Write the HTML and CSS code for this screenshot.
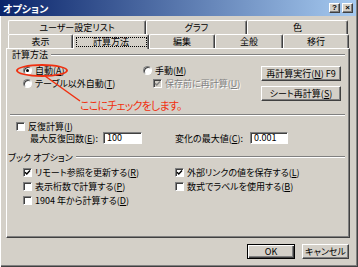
FILE: index.html
```html
<!DOCTYPE html>
<html lang="ja">
<head>
    <meta charset="UTF-8">
    <title>オプション</title>
    <link rel="stylesheet" href="styles.css">
</head>
<body>
    <div class="window">
        <div class="titlebar">
            <span class="title">オプション</span>
            <div class="caption-btns">
                <span class="cbtn">?</span>
                <span class="cbtn">×</span>
            </div>
        </div>

        <div class="tabs">
            <div class="tab-row">
                <div class="tab w138">ユーザー設定リスト</div>
                <div class="tab w101">グラフ</div>
                <div class="tab w101">色</div>
            </div>
            <div class="tab-row">
                <div class="tab w65">表示</div>
                <div class="tab w76 active"><span class="focus">計算方法</span></div>
                <div class="tab w66">編集</div>
                <div class="tab w68">全般</div>
                <div class="tab w66">移行</div>
            </div>
        </div>

        <div class="panel">
            <div class="group-head calc-head">計算方法</div>

            <div class="calc">
                <div class="opts">
                    <div class="col col1">
                        <div class="opt"><span class="radio checked"></span><span>自動(<u>A</u>)</span></div>
                        <div class="opt"><span class="radio"></span><span>テーブル以外自動(<u>T</u>)</span></div>
                    </div>
                    <div class="col">
                        <div class="opt"><span class="radio"></span><span>手動(<u>M</u>)</span></div>
                        <div class="opt sub disabled"><span class="check on"><svg viewBox="0 0 7 7"><polyline points="1,3.2 2.8,5 6,1.6"/></svg></span><span>保存前に再計算(<u>U</u>)</span></div>
                    </div>
                </div>
                <div class="btns">
                    <div class="btn wide"><span>再計算実行(<u>N</u>) F9</span></div>
                    <div class="btn wide"><span>シート再計算(<u>S</u>)</span></div>
                </div>

                <!-- 注釈 -->
                <div class="mark"></div>
                <svg class="pointer" width="90" height="50"><line x1="38" y1="16" x2="73" y2="41"/></svg>
                <div class="note">ここにチェックをします。</div>
            </div>

            <div class="sep"></div>

            <div class="opt iter"><span class="check"></span><span>反復計算(<u>I</u>)</span></div>
            <div class="limits">
                <span class="lbl lbl1">最大反復回数(<u>E</u>):</span>
                <span class="field f1">100</span>
                <span class="lbl lbl2">変化の最大値(<u>C</u>):</span>
                <span class="field f2">0.001</span>
            </div>

            <div class="group-head book-head">ブック オプション</div>

            <div class="book">
                <div class="opt"><span class="check on"><svg viewBox="0 0 7 7"><polyline points="1,3.2 2.8,5 6,1.6"/></svg></span><span>リモート参照を更新する(<u>R</u>)</span></div>
                <div class="opt"><span class="check on"><svg viewBox="0 0 7 7"><polyline points="1,3.2 2.8,5 6,1.6"/></svg></span><span>外部リンクの値を保存する(<u>L</u>)</span></div>
                <div class="opt"><span class="check"></span><span>表示桁数で計算する(<u>P</u>)</span></div>
                <div class="opt"><span class="check"></span><span>数式でラベルを使用する(<u>B</u>)</span></div>
                <div class="opt"><span class="check"></span><span>1904 年から計算する(<u>D</u>)</span></div>
            </div>
        </div>

        <div class="footer">
            <div class="btn ok">OK</div>
            <div class="btn cancel">キャンセル</div>
        </div>
    </div>
</body>
</html>
```

FILE: styles.css
```css
* {
    box-sizing: border-box;
}
body {
    margin: 0;
    font-family: "Noto Sans CJK JP", "Liberation Sans", sans-serif;
    font-size: 9px;
    font-feature-settings: "palt";
    color: #000;
    background-color: #d4d0c8;
}
u {
    text-decoration: underline;
    text-underline-offset: 1px;
}
.window {
    width: 358px;
    height: 267px;
    background-color: #d4d0c8;
    display: flex;
    flex-direction: column;
    box-shadow: inset 1px 0 #fff, inset -1px -1px #404040, inset -2px -2px #808080;
}

/* タイトルバー */
.titlebar {
    height: 16px;
    margin-right: 2px;
    padding: 0 3px 0 3px;
    display: flex;
    align-items: center;
    justify-content: space-between;
    background: linear-gradient(to right, #0a246a, #a6caf0);
}
.title {
    color: #fff;
    font-weight: bold;
    font-size: 10px;
}
.caption-btns {
    display: flex;
    gap: 2px;
}
.cbtn {
    width: 11px;
    height: 10px;
    background-color: #d4d0c8;
    border: 1px solid;
    border-color: #fff #404040 #404040 #fff;
    box-shadow: inset -1px -1px #808080;
    font-family: "Liberation Sans", sans-serif;
    font-weight: bold;
    font-size: 8px;
    line-height: 8px;
    text-align: center;
}

/* タブ */
.tabs {
    margin-top: 4px;
    padding-left: 8px;
}
.tab-row {
    display: flex;
    height: 14px;
}
.tab {
    height: 14px;
    border-top: 1px solid #fff;
    border-left: 1px solid #fff;
    border-right: 1px solid #404040;
    border-radius: 2px 2px 0 0;
    box-shadow: inset -1px 0 #808080;
    display: flex;
    align-items: center;
    justify-content: center;
    background-color: #d4d0c8;
}
.tab.active {
    height: 15px;
    margin-bottom: -1px;
    position: relative;
    z-index: 1;
}
.tab.active .focus {
    border: 1px dotted #000;
    width: 71px;
    height: 10px;
    display: flex;
    align-items: center;
    justify-content: center;
    margin-top: -1px;
}
.w138 { width: 138px; }
.w101 { width: 101px; }
.w65 { width: 65px; }
.w76 { width: 76px; }
.w66 { width: 66px; }
.w68 { width: 68px; }

/* パネル */
.panel {
    margin-left: 6px;
    width: 344px;
    height: 190px;
    border: 1px solid;
    border-color: #fff #404040 #404040 #fff;
    box-shadow: inset -1px -1px #808080;
}
.group-head {
    display: flex;
    align-items: center;
    height: 11px;
    padding-right: 4px;
}
.group-head::after {
    content: "";
    flex: 1;
    margin-left: 3px;
    border-top: 1px solid #808080;
    border-bottom: 1px solid #fff;
}
.calc-head {
    padding-left: 5px;
}
.book-head {
    height: 12px;
    margin-top: 7px;
    padding-left: 1px;
}

.calc {
    position: relative;
    display: flex;
    height: 45px;
}
.opts {
    display: flex;
    padding-left: 16px;
    padding-top: 4px;
}
.col1 {
    width: 120px;
}
.opt {
    display: flex;
    align-items: center;
    gap: 3px;
    height: 13px;
    white-space: nowrap;
}
.opt.sub {
    padding-left: 10px;
}
.disabled {
    color: #808080;
    text-shadow: 1px 1px #fff;
}

.radio {
    width: 9px;
    height: 9px;
    border-radius: 50%;
    background-color: #fff;
    border: 1px solid;
    border-color: #808080 #fff #fff #808080;
    box-shadow: inset 1px 1px #404040;
    display: flex;
    align-items: center;
    justify-content: center;
}
.radio.checked::after {
    content: "";
    width: 3px;
    height: 3px;
    border-radius: 50%;
    background-color: #000;
}
.check {
    width: 9px;
    height: 9px;
    flex: none;
    background-color: #fff;
    border: 1px solid;
    border-color: #808080 #fff #fff #808080;
    box-shadow: inset 1px 1px #404040;
    display: flex;
}
.check svg {
    width: 7px;
    height: 7px;
}
.check polyline {
    fill: none;
    stroke: #000;
    stroke-width: 1.4;
}
.disabled .check {
    background-color: #d4d0c8;
}
.disabled .check polyline {
    stroke: #808080;
}

.btns {
    margin-left: auto;
    margin-right: 8px;
    padding-top: 6px;
    display: flex;
    flex-direction: column;
    gap: 5px;
}
.btn {
    height: 15px;
    border: 1px solid;
    border-color: #fff #404040 #404040 #fff;
    box-shadow: inset -1px -1px #808080;
    display: flex;
    align-items: center;
    justify-content: center;
    white-space: nowrap;
}
.btn.wide {
    width: 80px;
}

/* 注釈 */
.mark {
    position: absolute;
    left: 9px;
    top: 4px;
    width: 52px;
    height: 13px;
    border: 2px solid #f03010;
    border-radius: 50%;
}
.pointer {
    position: absolute;
    left: 0;
    top: 0;
}
.pointer line {
    stroke: #f03010;
    stroke-width: 1.5;
}
.note {
    position: absolute;
    left: 73px;
    top: 37px;
    color: #f03010;
    font-size: 11px;
    letter-spacing: -0.8px;
    white-space: nowrap;
}

.sep {
    margin: 9px 4px 0 3px;
    border-top: 1px solid #808080;
    border-bottom: 1px solid #fff;
}
.iter {
    margin-top: 5px;
    padding-left: 9px;
    height: 11px;
}
.limits {
    display: flex;
    align-items: center;
    height: 12px;
    padding-left: 23px;
}
.lbl {
    white-space: nowrap;
}
.lbl1 {
    width: 73px;
}
.lbl2 {
    width: 75px;
    margin-left: 33px;
}
.field {
    height: 12px;
    background-color: #fff;
    border: 1px solid;
    border-color: #808080 #fff #fff #808080;
    box-shadow: inset 1px 1px #404040;
    padding-left: 3px;
    line-height: 10px;
}
.f1 {
    width: 39px;
}
.f2 {
    width: 38px;
}

.book {
    margin-top: 2px;
    padding-left: 16px;
    display: grid;
    grid-template-columns: 152px 1fr;
}
.book .opt {
    height: 14px;
}

/* ボタン */
.footer {
    display: flex;
    justify-content: flex-end;
    gap: 7px;
    padding: 6px 9px 0 0;
}
.ok {
    width: 48px;
    border-color: #000;
    box-shadow: inset 1px 1px #fff, inset -1px -1px #404040, inset -2px -2px #808080;
}
.cancel {
    width: 47px;
}
```
